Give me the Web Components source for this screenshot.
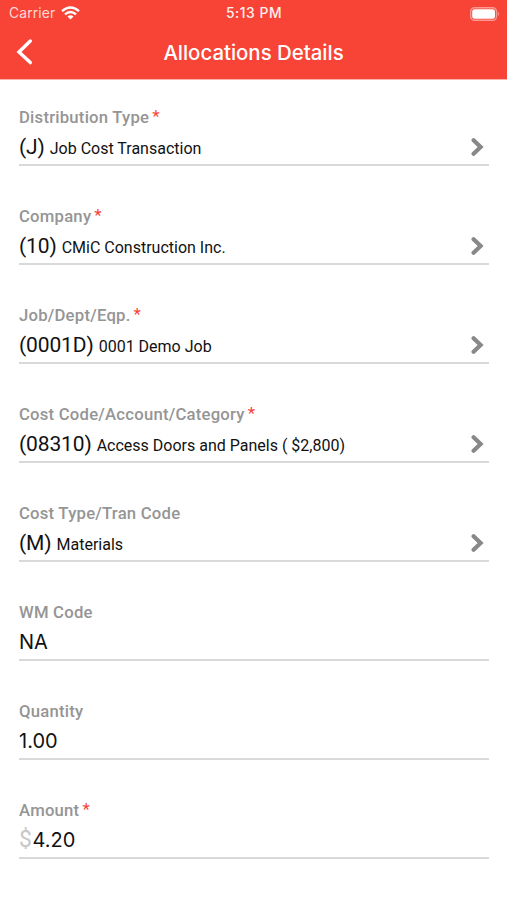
<!DOCTYPE html>
<html lang="en"><head><meta charset="utf-8"><title>Allocations Details</title>
<style>body{margin:0;background:#fff;height:900px;overflow:hidden}</style></head><body>
<app-screen>
<status-bar slot="top"></status-bar>
<nav-bar slot="top">Allocations Details</nav-bar>
<form-field label="Distribution Type" required code="(J)" link>Job Cost Transaction</form-field>
<form-field label="Company" required code="(10)" link>CMiC Construction Inc.</form-field>
<form-field label="Job/Dept/Eqp." required code="(0001D)" link>0001 Demo Job</form-field>
<form-field label="Cost Code/Account/Category" required code="(08310)" link>Access Doors and Panels ( $2,800)</form-field>
<form-field label="Cost Type/Tran Code" code="(M)" link>Materials</form-field>
<form-field label="WM Code" input="NA"></form-field>
<form-field label="Quantity" input="1.00"></form-field>
<form-field label="Amount" required prefix="$" input="4.20"></form-field>
</app-screen>
<script>
const define=(name,render)=>customElements.define(name,class extends HTMLElement{
  constructor(){super();this.attachShadow({mode:'open'});}
  connectedCallback(){this.shadowRoot.innerHTML=render(this);}
});
define('app-screen',()=>`<style>
:host{display:block;width:507px;height:900px;background:#fff;font-family:Roboto,sans-serif}
header{background:#f74437;height:79px;color:#fff;box-sizing:border-box;box-shadow:0 1px 0 #fbb0aa}
main{display:flex;flex-direction:column;gap:37px;padding:25px 18px 0 19px}
</style><header><slot name="top"></slot></header><main><slot></slot></main>`);
define('status-bar',()=>`<style>
:host{display:grid;grid-template-columns:1fr auto 1fr;align-items:center;height:27px;padding:0 7px 0 9px;font:400 13.8px/27px Inter,sans-serif}
.l{display:flex;align-items:center;gap:6px;color:#ffd9d5;letter-spacing:.15px}
.l svg{margin-top:-2px}
.t{font-weight:500;letter-spacing:.55px;color:#fff0ee;margin-right:1px}
.r{justify-self:end;display:flex}svg{display:block}
</style><div class="l"><span>Carrier</span><svg width="19" height="14" viewBox="0 0 19 14" fill="none" stroke="#fff" stroke-width="2.4"><path d="M1 5.2Q9.5-2.4 18 5.2M4 8.4Q9.5 3.4 15 8.4"/><path d="M6.5 10.5Q9.5 8 12.5 10.5L9.5 13.6Z" fill="#fff" stroke="none"/></svg></div>
<div class="t">5:13 PM</div>
<div class="r"><svg width="30" height="14" viewBox="0 0 30 14"><rect x=".7" y=".7" width="25.8" height="12.6" rx="3.8" fill="none" stroke="#fb9b93" stroke-width="1.4"/><rect x="2.2" y="2.2" width="22.8" height="9.6" rx="2.3" fill="#fff"/><path d="M28 4.8Q30 7 28 9.2Z" fill="#fb9b93"/></svg></div>`);
define('nav-bar',()=>`<style>
:host{display:grid;grid-template-columns:40px 1fr 40px;align-items:center;height:51px;font:500 20.4px/51px Inter,sans-serif;color:#fff}
svg{display:block;margin-left:15px;margin-top:-1px}h1{margin:0;font:inherit;text-align:center;white-space:nowrap}
</style><svg width="18" height="28" viewBox="0 0 18 28" fill="none" stroke="#fff" stroke-width="3.4" stroke-linecap="round" stroke-linejoin="miter"><path d="M15.3 3L4 14L15.3 24.6"/></svg><h1><slot></slot></h1>`);
define('form-field',e=>{const a=n=>e.getAttribute(n)||'',h=n=>e.hasAttribute(n);return `<style>
:host{display:flex;flex-direction:column;height:62px;box-sizing:border-box;border-bottom:2px solid #d9d9d9;color:#111}
.label{height:26px;display:flex;font:500 16.7px/27px Roboto,sans-serif;color:#959595;letter-spacing:.22px}
.label i{font:400 17px/24px Roboto,sans-serif;color:#f74437;margin-left:3px}
.value{height:34px;display:flex;align-items:baseline;white-space:pre}
.code{font:400 21px/35px Roboto,sans-serif;letter-spacing:-.12px;margin-right:5px}
.desc{font:400 16px/35px Roboto,sans-serif}
.input{font:400 20px/34px Inter,sans-serif;letter-spacing:0}
.prefix{font:400 23px/34px Roboto,sans-serif;color:#c8c8c8;margin-right:.5px}
svg{align-self:center;margin-left:auto;margin-right:5px}
</style><div class="label"><span>${a('label')}</span>${h('required')?'<i>*</i>':''}</div>
<div class="value">${h('code')?`<span class="code">${a('code')}</span><span class="desc"><slot></slot></span>`:''}${h('prefix')?`<span class="prefix">${a('prefix')}</span>`:''}${h('input')?`<span class="input">${a('input')}</span>`:''}${h('link')?'<svg width="13" height="20" viewBox="0 0 13 20" fill="none" stroke="#888" stroke-width="4.2" stroke-linecap="round"><path d="M2.6 3.2L9.6 10L2.6 16.8"/></svg>':''}</div>`;});
</script></body></html>
